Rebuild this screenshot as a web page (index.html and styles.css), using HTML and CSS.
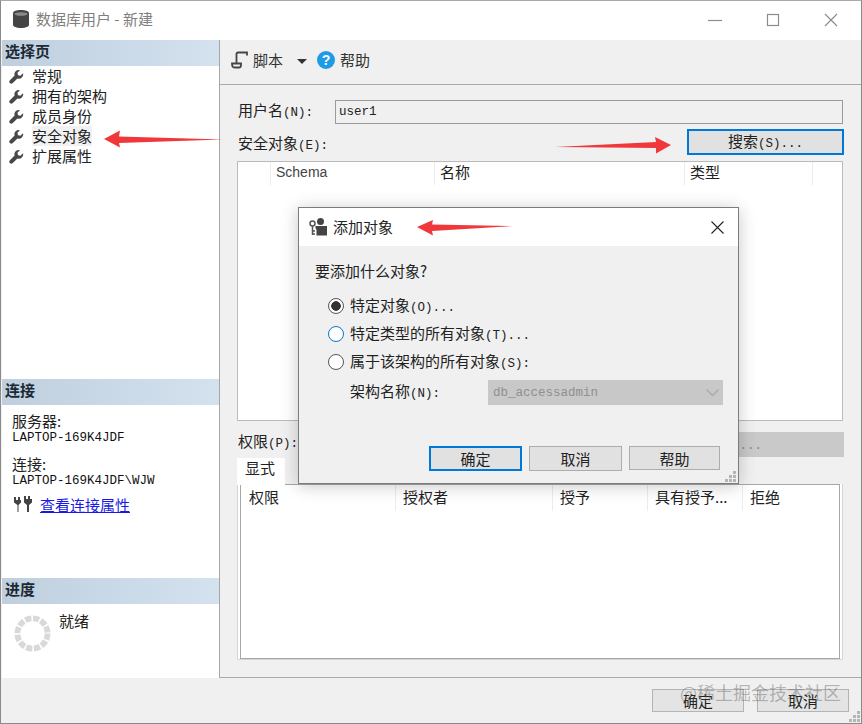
FILE: index.html
```html
<!DOCTYPE html>
<html lang="zh-CN">
<head>
<meta charset="utf-8">
<title>数据库用户 - 新建</title>
<link rel="stylesheet" href="styles.css">
</head>
<body>
<svg class="defs" width="0" height="0" aria-hidden="true">
  <symbol id="wrench" viewBox="0 0 16 16"><path d="M15 4.500L12.200 7.200 9.600 6.600 9 4 11.700 1.200A4.600 4.600 0 0 0 6 7L1 12A2.100 2.100 0 0 0 4 15L9 10A4.600 4.600 0 0 0 15 4.500Z"/></symbol>
</svg>
<div class="window">
  <header class="titlebar">
    <svg class="db-icon" viewBox="0 0 16 18"><path d="M0 3.200C0 1.200 3.600 0 8 0s8 1.200 8 3.200v11.600c0 2-3.600 3.200-8 3.200s-8-1.200-8-3.200Z" fill="#444"/><ellipse cx="8" cy="4" rx="6.500" ry="1.800" fill="#8a8a8a"/></svg>
    <span class="title-text">数据库用户 - 新建</span>
    <div class="controls">
      <svg viewBox="0 0 14 14"><path d="M0 7.500H14" /></svg>
      <svg viewBox="0 0 14 14"><rect x="1.500" y="1.500" width="11" height="11"/></svg>
      <svg viewBox="0 0 14 14"><path d="M1 1L13 13M13 1L1 13"/></svg>
    </div>
  </header>
  <div class="content">
    <aside class="sidebar">
      <section>
        <h2 class="side-head">选择页</h2>
        <ul class="pages">
          <li><svg class="wrench"><use href="#wrench"/></svg><span>常规</span></li>
          <li><svg class="wrench"><use href="#wrench"/></svg><span>拥有的架构</span></li>
          <li><svg class="wrench"><use href="#wrench"/></svg><span>成员身份</span></li>
          <li><svg class="wrench"><use href="#wrench"/></svg><span class="selected">安全对象</span></li>
          <li><svg class="wrench"><use href="#wrench"/></svg><span>扩展属性</span></li>
        </ul>
      </section>
      <section>
        <h2 class="side-head">连接</h2>
        <div class="conn">
          <div class="conn-label">服务器:</div>
          <div class="m">LAPTOP-169K4JDF</div>
          <div class="conn-label second">连接:</div>
          <div class="m">LAPTOP-169K4JDF\WJW</div>
          <div class="conn-link">
            <svg class="plug" viewBox="0 0 18 16"><path d="M0 1h2v3h2V1h2v3h1v2.500L4.500 9v7h-1V9L0 6.500Z"/><path d="M10 0h2v3h2V0h2v3h2v3.500L15 9v7h-2V9L10 6.500Z"/></svg>
            <a href="#">查看连接属性</a>
          </div>
        </div>
      </section>
      <section>
        <h2 class="side-head">进度</h2>
        <div class="progress">
          <svg class="ring" viewBox="0 0 38 38"><circle cx="19" cy="19" r="15.500" fill="none" stroke="#d9d9d9" stroke-width="6" stroke-dasharray="6.400 1.720"/></svg>
          <span>就绪</span>
        </div>
      </section>
    </aside>
    <main class="main">
      <div class="toolbar">
        <svg class="script-icon" viewBox="0 0 17 18"><path d="M16 4.500V1.500H7C6 1.500 5.500 2 5.500 3V12.500M1 12.500H10V14C10 15.500 9 16.500 8 16.500H3.500C1.700 16.500 1 15 1 12.500Z" fill="none" stroke="#444" stroke-width="1.800"/></svg>
        <span class="tool-label">脚本</span>
        <i class="caret"></i>
        <span class="help-icon">?</span>
        <span class="tool-label">帮助</span>
      </div>
      <div class="form">
        <div class="row-user">
          <label>用户名<span class="m">(N):</span></label>
          <div class="input m">user1</div>
        </div>
        <div class="row-search">
          <label>安全对象<span class="m">(E):</span></label>
          <button class="btn btn-focus btn-search">搜索<span class="m">(S)...</span></button>
        </div>
        <div class="grid-box securables">
          <div class="grid-head sec-cols">
            <span></span><span class="schema">Schema</span><span>名称</span><span>类型</span><span></span>
          </div>
        </div>
        <div class="row-perm">
          <label>权限<span class="m">(P):</span></label>
          <button class="btn-disabled">有效<span class="m">(F)...</span></button>
        </div>
        <div class="tabs"><span class="tab">显式</span></div>
        <div class="tab-panel">
          <div class="grid-box perms">
            <div class="grid-head perm-cols">
              <span>权限</span><span>授权者</span><span>授予</span><span>具有授予...</span><span>拒绝</span>
            </div>
          </div>
        </div>
      </div>
    </main>
  </div>
  <footer class="footer">
    <button class="btn btn-foot">确定</button>
    <button class="btn btn-foot">取消</button>
    <svg class="grip grip-main" viewBox="0 0 11 11"><path d="M8 0h3v3H8zM4 4h3v3H4zM8 4h3v3H8zM0 8h3v3H0zM4 8h3v3H4zM8 8h3v3H8z"/></svg>
  </footer>
</div>

<div class="dialog">
  <div class="dlg-title">
    <svg class="dlg-icon" viewBox="0 0 18 18"><circle cx="11.500" cy="3.500" r="3.500" fill="#444"/><path d="M6.500 8h11.500v9.500H7.500V12L6.500 10Z" fill="#444"/><circle cx="3.500" cy="5.500" r="2.500" fill="none" stroke="#555" stroke-width="1.500"/><path d="M3.500 8v9M3.500 13h2.500M3.500 16h2.500" fill="none" stroke="#555" stroke-width="1.500"/></svg>
    <span>添加对象</span>
    <svg class="dlg-close" viewBox="0 0 13 13"><path d="M.5.500L12.500 12.500M12.500.500L.5 12.500"/></svg>
  </div>
  <div class="dlg-body">
    <p class="dlg-q">要添加什么对象?</p>
    <div class="radios">
      <div class="radio-row"><i class="radio radio-on"></i><span>特定对象<span class="m">(O)...</span></span></div>
      <div class="radio-row"><i class="radio radio-focus"></i><span>特定类型的所有对象<span class="m">(T)...</span></span></div>
      <div class="radio-row"><i class="radio"></i><span>属于该架构的所有对象<span class="m">(S):</span></span></div>
    </div>
    <div class="schema-row">
      <label>架构名称<span class="m">(N):</span></label>
      <div class="select m"><span>db_accessadmin</span>
        <svg class="chev" viewBox="0 0 13 7"><path d="M.5.500L6.500 6.500 12.500.500"/></svg>
      </div>
    </div>
    <div class="dlg-actions">
      <button class="btn btn-focus btn-dlg">确定</button>
      <button class="btn btn-dlg">取消</button>
      <button class="btn btn-dlg btn-help">帮助</button>
    </div>
    <svg class="grip grip-dlg" viewBox="0 0 11 11"><path d="M8 0h3v3H8zM4 4h3v3H4zM8 4h3v3H8zM0 8h3v3H0zM4 8h3v3H4zM8 8h3v3H8z"/></svg>
  </div>
</div>

<svg class="arrows" viewBox="0 0 862 724" aria-hidden="true">
  <path d="M104 139L120 130.500 119 136.500 223 139.500 119 143 120 147.500Z"/>
  <path d="M555 147L656 142 655 137 671 145 656 153.500 656 148Z"/>
  <path d="M417 227L433 220 432 224.500 514 226 432 231 433 235.500Z"/>
</svg>
<div class="watermark">@稀土掘金技术社区</div>
</body>
</html>
```
FILE: styles.css
```css
* { box-sizing: border-box; }
html, body { margin: 0; padding: 0; }
body {
  position: relative;
  width: 862px;
  height: 724px;
  overflow: hidden;
  font-family: "Noto Sans CJK SC", "Liberation Sans", sans-serif;
  font-size: 15px;
  line-height: 20px;
  color: #222;
  background: #f0f0f0;
}
.defs { position: absolute; }
.m { font-family: "Liberation Mono", "Noto Sans CJK SC", monospace; font-size: 12.5px; }

.window {
  display: flex;
  flex-direction: column;
  height: 724px;
  border: 1px solid #8a8a8a;
  border-top-color: #aaa;
}
.titlebar {
  display: flex;
  align-items: center;
  height: 39px;
  flex: none;
  background: #fff;
  padding-left: 12px;
  padding-bottom: 4px;
}
.db-icon { width: 16px; height: 18px; margin-right: 7px; }
.title-text { color: #808080; font-size: 15px; }
.controls { margin-left: auto; display: flex; gap: 44px; padding-right: 23px; margin-top: 2px; }
.controls svg { width: 14px; height: 14px; fill: none; stroke: #8c8c8c; stroke-width: 1.2; }

.content { flex: 1; display: flex; min-height: 0; }
.sidebar {
  width: 218px;
  flex: none;
  display: grid;
  grid-template-rows: 339px 199px 1fr;
  margin-left: 1px;
  background: #fff;
  border-right: 1px solid #a6a6a6;
}
.side-head {
  margin: 0;
  height: 26px;
  padding-left: 3px;
  font-size: 15px;
  line-height: 21px;
  font-weight: 700;
  color: #1c2a36;
  background: linear-gradient(90deg, #bfcfdd 0%, #d4e2f0 100%);
}
.pages { list-style: none; margin: 0; padding: 0 0 0 7px; }
.pages li { display: flex; align-items: center; height: 20px; }
.wrench { width: 15px; height: 15px; fill: #484848; margin-right: 8px; flex: none; }
.selected { background: #f1f1f1; }

.conn { padding: 7px 0 0 10px; line-height: 15px; }
.conn-label { height: 16px; line-height: 17px; font-size: 15px; }
.second { margin-top: 10px; }
.conn .m { height: 14px; line-height: 14px; color: #111; margin-top: 3px; }
.conn-link { display: flex; align-items: center; margin-top: 6px; padding-left: 2px; height: 20px; }
.plug { width: 18px; height: 16px; fill: #444; margin-right: 8px; }
.conn-link a { color: #1a1ae6; font-size: 15px; }

.progress { display: flex; padding: 7px 0 0 12px; }
.ring { width: 37px; height: 37px; margin-right: 8px; margin-top: 4px; }

.main { flex: 1; min-width: 0; display: flex; flex-direction: column; }
.toolbar {
  height: 45px;
  flex: none;
  display: flex;
  align-items: center;
  padding-left: 11px;
  border-bottom: 1px solid #a9a9a9;
  padding-bottom: 5px;
}
.script-icon { width: 17px; height: 18px; margin-right: 5px; }
.tool-label { font-size: 15px; color: #333; }
.caret {
  width: 0; height: 0;
  border: 5px solid transparent;
  border-top: 5px solid #333;
  border-bottom: 0;
  margin: 3px 10px 0 14px;
}
.help-icon {
  width: 18px; height: 18px;
  border-radius: 50%;
  background: #1e9be6;
  color: #fff;
  font: 700 14px/18px "Liberation Sans", sans-serif;
  text-align: center;
  margin-right: 5px;
}
.form { flex: 1; display: flex; flex-direction: column; padding: 15px 18px 17px 17px; border-bottom: 1px solid #a9a9a9; }
.row-user { display: flex; align-items: center; height: 24px; }
.row-user label { width: 98px; flex: none; margin-top: -2px; padding-left: 1px; }
.input {
  flex: 1;
  height: 24px;
  padding: 0 3px;
  line-height: 22px;
  color: #222;
  background: #f0f0f0;
  border: 1px solid #9a9a9a;
}
.row-search { display: flex; align-items: center; justify-content: space-between; height: 26px; margin-top: 5px; }
.row-search label { margin-top: 4px; padding-left: 1px; }
.btn {
  font-family: inherit;
  font-size: 15px;
  color: #222;
  background: #e1e1e1;
  border: 1px solid #adadad;
  padding: 0;
  line-height: 20px;
}
.btn-focus { border: 2px solid #0078d7; }
.btn-search { width: 157px; height: 26px; margin-right: -1px; }
.grid-box { background: #fff; border: 1px solid #a0a0a0; }
.securables { height: 260px; margin-top: 6px; border-color: #bbb; }
.grid-head { display: grid; height: 23px; line-height: 20px; }
.grid-head span { padding-left: 5px; border-left: 1px solid #ececec; white-space: nowrap; overflow: hidden; }
.grid-head span:first-child { border-left: 0; }
.sec-cols { grid-template-columns: 32px 164px 250px 128px 1fr; }
.schema { font: 14px/20px "Liberation Sans", sans-serif; color: #444; }
.row-perm { display: flex; align-items: center; justify-content: space-between; height: 25px; margin-top: 11px; }
.row-perm label { margin-top: -5px; padding-left: 1px; }
.btn-disabled {
  width: 157px;
  height: 25px;
  margin-right: -1px;
  border: 0;
  padding: 0 86px 0 0;
  text-align: right;
  white-space: nowrap;
  background: #c9c9c9;
  color: #888;
  font: inherit;
}
.tabs { height: 26px; margin-top: 1px; flex: none; }
.tab {
  display: block;
  width: 48px;
  height: 27px;
  padding-left: 8px;
  line-height: 20px;
  background: #fff;
  position: relative;
}
.tab-panel { flex: 1; padding: 0 2px; background: #fff; border: 1px solid #d4d4d4; border-top: 0; }
.perms { height: 100%; border-color: #a8a8a8; }
.perm-cols { grid-template-columns: 154px 157px 95px 95px 1fr; height: 26px; line-height: 24px; }
.perm-cols span { padding-left: 7px; }
.perm-cols span:first-child { padding-left: 8px; }

.footer { flex: none; height: 45px; display: flex; gap: 13px; padding: 11px 11px 0 651px; position: relative; }
.btn-foot { width: 92px; height: 23px; background: #e4e4e4; border-color: #b4b4b4; line-height: 22px; }
.grip { position: absolute; fill: #b5b5b5; width: 11px; height: 11px; right: 1px; bottom: 1px; }

.dialog {
  position: absolute;
  left: 298px;
  top: 207px;
  width: 441px;
  height: 277px;
  background: #f0f0f0;
  border: 1px solid #7c7c7c;
  box-shadow: 0 2px 16px rgba(0, 0, 0, .22);
  display: flex;
  flex-direction: column;
}
.dlg-title {
  height: 38px;
  flex: none;
  background: #fff;
  display: flex;
  align-items: center;
  padding-left: 10px;
  font-size: 15px;
}
.dlg-icon { width: 18px; height: 18px; margin-right: 6px; }
.dlg-close { width: 13px; height: 13px; margin-left: auto; margin-right: 14px; fill: none; stroke: #222; stroke-width: 1.100; }
.dlg-body { flex: 1; position: relative; padding: 15px 15px 0 16px; }
.dlg-q { margin: 0; height: 20px; }
.radios { margin-top: 11px; padding-left: 13px; }
.radio-row { display: flex; align-items: center; height: 28px; }
.radio {
  width: 16px; height: 16px;
  border-radius: 50%;
  border: 1.500px solid #555;
  background: #fff;
  margin-right: 6px;
  flex: none;
}
.radio-on { background: radial-gradient(circle, #333 0 4.500px, #fff 5px); }
.radio-focus { border-color: #0078d7; }
.schema-row { display: flex; align-items: center; height: 25px; margin-top: 4px; padding-left: 35px; }
.schema-row label { width: 138px; flex: none; }
.select {
  width: 235px;
  height: 25px;
  background: #c8c8c8;
  color: #8f8f8f;
  display: flex;
  align-items: center;
  justify-content: space-between;
  padding: 0 4px 0 5px;
}
.chev { width: 13px; height: 7px; fill: none; stroke: #a8a8a8; stroke-width: 1.300; margin-right: 0; }
.dlg-actions { display: flex; gap: 7px; margin-top: 41px; padding-left: 114px; }
.btn-dlg { width: 93px; height: 25px; background: #e1e1e1; line-height: 21px; }
.btn-help { width: 91px; height: 24px; margin-left: 0; }
.grip-dlg { right: 2px; bottom: 1px; }

.arrows { position: absolute; left: 0; top: 0; width: 862px; height: 724px; fill: #f0383a; pointer-events: none; }
.watermark {
  position: absolute;
  left: 680px;
  top: 680px;
  font-size: 18px;
  line-height: 24px;
  letter-spacing: 0;
  color: rgba(70, 70, 70, .36);
  white-space: nowrap;
}
```
